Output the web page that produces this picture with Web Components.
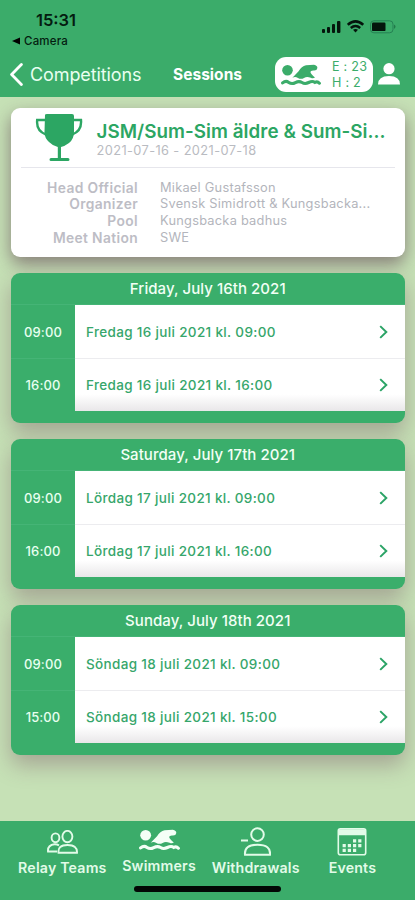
<!DOCTYPE html>
<html lang="en">
<head>
<meta charset="utf-8">
<title>Sessions</title>
<style>
html,body{margin:0;height:100%}
body{font-family:Inter,"Liberation Sans",sans-serif;background:#c6e1b6;overflow:hidden}
</style>
</head>
<body>
<meet-app></meet-app>
<script>
const define = (name, html) => customElements.define(name, class extends HTMLElement {
  constructor() {
    super();
    this.attachShadow({mode: 'open'}).innerHTML = typeof html === 'function' ? html(this) : html;
  }
});

define('swim-icon', `<style>:host{display:block}svg{display:block;width:100%;height:100%}</style>
<svg viewBox="0 0 40 22" preserveAspectRatio="none" fill="currentColor"><circle cx="6.5" cy="6.2" r="5.3"/>
<path d="M11.4 13.8 17.6 7.2Q20.5 2.4 25 1.3L33 .7Q36.4 1.4 36.4 4Q36 6.6 33 6.5Q29.5 6.2 29.4 8Q30 10.4 34 13.6Q32 15 29.8 13.8Q26 12 23 13.9Q20 15.6 17 13.9Q14 12.4 11.4 13.8Z"/>
<path d="M1.6 18.9Q4.8 16.2 7.8 18.4T14.4 18.6T21 18.5T27.7 18.5T34 18.4Q36.5 17.2 38.4 19.2" fill="none" stroke="currentColor" stroke-width="3.1" stroke-linecap="round"/></svg>`);

define('status-bar', `<style>
:host{display:flex;justify-content:space-between;height:54px;box-sizing:border-box;padding:12px 18px 0 12px;color:#041c10}
.time{margin-left:24px;font-size:16.5px;line-height:17px;font-weight:600;letter-spacing:0}
.from{display:flex;align-items:center;gap:4px;margin-top:5px;font-size:11.5px;line-height:14px;font-weight:500;letter-spacing:.2px}
.icons{display:flex;align-items:flex-start;gap:6px;padding-top:8px}svg{display:block}
</style><div><div class="time">15:31</div><div class="from"><svg width="8" height="8"><path d="M8 .6v6.8L0 4Z"/></svg><span>Camera</span></div></div>
<div class="icons"><svg width="19" height="14" fill="#04150c"><rect x="0" y="9" width="3" height="4" rx="1"/><rect x="5" y="7" width="3" height="6" rx="1"/><rect x="10" y="4" width="3" height="9" rx="1"/><rect x="15" y="1" width="3.4" height="12" rx="1"/></svg>
<svg width="17" height="13" viewBox="0 0 17 13" fill="none" stroke="#04150c" stroke-width="2.5"><path d="M.8 4.8Q8.5-2 16.2 4.8M3.8 8Q8.5 4 13.2 8"/><path d="M6 9.8Q8.5 8 11 9.8L8.5 12.5Z" fill="#04150c" stroke="none"/></svg>
<svg width="27" height="14"><rect x=".5" y=".8" width="22.5" height="12" rx="3.4" fill="none" stroke="#258153"/><rect x="2" y="2.5" width="13.5" height="8.6" rx="1.2" fill="#04150c"/><path d="M24.3 4.6Q26.5 6.8 24.3 9Z" fill="#17633b"/></svg></div>`);

define('nav-bar', `<style>
:host{display:grid;grid-template-columns:173px 102px 98px 1fr;height:43px;color:#fff;align-items:start}
.back{display:flex;align-items:center;gap:7px;padding:7px 0 0 10px;color:#e9fff0}
.back span{font-size:18px;line-height:27px;letter-spacing:-.1px}
b{font-size:15.5px;line-height:24px;padding-top:9px;font-weight:700;letter-spacing:.03px}
.pill{display:flex;margin-top:3px;height:35px;background:#fff;border-radius:11px;color:#3bac6a;align-items:center}
swim-icon{width:40px;height:22px;margin-left:6px}
.n{margin-left:11px;font-size:12.6px;line-height:15.3px;letter-spacing:.25px;white-space:pre}
.me{padding:8px 0 0 5px}svg{display:block}
</style><div class="back"><svg width="13" height="23" fill="none" stroke="#fff" stroke-width="2.8" stroke-linecap="round" stroke-linejoin="round"><path d="M11.4 1.6 1.6 11.5l9.8 9.9"/></svg><span>Competitions</span></div>
<b>Sessions</b><div class="pill"><swim-icon></swim-icon><div class="n">E : 23<br>H : 2</div></div>
<div class="me"><svg width="22" height="24" fill="#fff"><circle cx="11" cy="6.7" r="5.6"/><path d="M0 22.5Q0 14 11 14T22 22.5Z"/></svg></div>`);

define('meet-field', e => `<style>
:host{display:grid;grid-template-columns:127px 1fr;column-gap:22px;height:16.7px;line-height:16.7px;align-items:center}
b{text-align:right;font-weight:600;font-size:13.8px;letter-spacing:.36px;color:#bdbdc5}
span{font-size:12.8px;letter-spacing:.25px;color:#b3b5bc;white-space:nowrap}
</style><b>${e.getAttribute('label')}</b><span><slot></slot></span>`);

define('meet-card', `<style>
:host{display:block;height:149px;border-radius:9px;background:#fff;box-shadow:0 7px 17px rgba(90,55,75,.58)}
.top{display:flex;height:59px}.cup{padding:6px 0 0 24px;width:61.5px}svg{display:block}
.t{padding-top:12px;font-weight:600;font-size:18.8px;line-height:23px;color:#2ca663;letter-spacing:.05px;white-space:nowrap}
.d{font-size:12.8px;line-height:15px;color:#b9bbc1;letter-spacing:.4px}
hr{height:1px;border:0;margin:0 10px;background:#e6e6ec}
.f{padding-top:11.5px}
</style><div class="top"><div class="cup"><svg width="48" height="50" viewBox="0 0 48 50"><path d="M10 1Q10 0 12 0H37Q39 0 39 2V18Q39 25 34 29Q30 32 26 33V44H33Q34.5 44 34.5 45.5T33 47H16Q14.5 47 14.5 45.5T16 44H22.8V33Q18 32 14 28Q9.5 24 9.5 18Z" fill="#2ca663"/><path d="M10 6H2.2Q1 17 11 20.5M38.5 6H46Q47 17 37 20.5" fill="none" stroke="#2ca663" stroke-width="2.4"/></svg></div>
<div><div class="t">JSM/Sum-Sim äldre &amp; Sum-Si...</div><div class="d">2021-07-16 - 2021-07-18</div></div></div><hr>
<div class="f"><meet-field label="Head Official">Mikael Gustafsson</meet-field><meet-field label="Organizer">Svensk Simidrott &amp; Kungsbacka...</meet-field><meet-field label="Pool">Kungsbacka badhus</meet-field><meet-field label="Meet Nation">SWE</meet-field></div>`);

define('session-row', e => `<style>
:host{display:grid;grid-template-columns:64px 1fr;height:53.6px;box-sizing:border-box;border-top:1px solid #45b476}
.time{display:flex;align-items:center;justify-content:center;color:#e8fff0;font-size:13px;font-weight:500;letter-spacing:.1px;padding-top:1px}
.go{display:flex;align-items:center;justify-content:space-between;padding:1px 17px 0 11px;background:#fff;color:#36a66b;font-size:13.5px;font-weight:500;letter-spacing:.34px;white-space:nowrap}
:host(:last-of-type) .go{background:linear-gradient(#fff 68%,#e9e7e9);box-shadow:0 -1px #ececef}
</style><div class="time">${e.getAttribute('time')}</div><div class="go"><span><slot></slot></span>
<svg width="9" height="14" fill="none" stroke="#2ca467" stroke-width="2"><path d="M1.2 1.1 7.3 7l-6.1 5.9"/></svg></div>`);

define('session-day', e => `<style>
:host{display:block;height:150px;border-radius:9px;overflow:hidden;background:#3aae6b;box-shadow:0 10px 22px rgba(115,75,95,.4)}
h2{margin:0;height:31px;line-height:31px;text-align:center;color:#f2fff5;font-size:15px;font-weight:500;letter-spacing:.06px}
</style><h2>${e.getAttribute('day')}</h2><slot></slot>`);

define('tab-item', e => `<style>
:host{display:flex;flex-direction:column;align-items:center;color:#e2fbe8}
.i{height:var(--h,36px);display:flex;align-items:flex-end}
span{margin-top:2px;font-size:14.2px;line-height:18px;font-weight:600;letter-spacing:.18px;white-space:nowrap}
</style><div class="i"><slot></slot></div><span>${e.getAttribute('label')}</span>`);

define('tab-bar', `<style>
:host{display:block;height:79px;background:#3bac6a}
nav{display:grid;grid-template-columns:repeat(4,96.7px);padding-left:14px;height:65px}
svg{display:block}swim-icon{width:41px;height:22px;color:#f4fff6}
.home{width:147px;height:6px;border-radius:3px;background:#020805;margin:0 auto}
</style><nav>
<tab-item label="Relay Teams"><svg style="margin-bottom:3px" width="31" height="24" fill="none" stroke="currentColor" stroke-width="1.9"><ellipse cx="20.4" cy="6.6" rx="5" ry="5.7"/><path d="M11.5 22.7Q10.5 15 20.5 15T30 22.7ZM10 21.5H1Q.5 15 7.5 14.3Q10 14.2 12 15.4"/><ellipse cx="8.5" cy="7.8" rx="3.9" ry="4.4"/></svg></tab-item>
<tab-item label="Swimmers" style="--h:34px"><swim-icon style="margin-bottom:4px"></swim-icon></tab-item>
<tab-item label="Withdrawals"><svg style="margin-bottom:1px" width="31" height="29" fill="none" stroke="currentColor" stroke-width="2"><circle cx="17.5" cy="7.6" r="6.3"/><path d="M5 27.7Q4 17.8 17.5 17.8T30 27.7ZM1 13.5H8"/></svg></tab-item>
<tab-item label="Events"><svg style="margin-bottom:1px" width="30" height="29" fill="none" stroke="currentColor" stroke-width="1.6"><rect x="1.3" y="1.8" width="27.4" height="26" rx="2"/><path d="M2.5 3H27.5V7.5H2.5Z" fill="currentColor"/><path d="M16 13.8H25M5.6 18.6H25M5.6 23.4H20" stroke-dasharray="3.2 2" stroke-width="3.2"/></svg></tab-item>
</nav><div class="home"></div>`);

define('meet-app', `<style>
:host{display:flex;flex-direction:column;width:415px;height:900px;overflow:hidden}
header{background:#3bac6a;height:97px}
main{flex:1;min-height:0;overflow:hidden;padding:11px 10.5px 0 11px;display:flex;flex-direction:column;gap:16px;background:#c6e1b6}
main>*{flex:none}
</style><header><status-bar></status-bar><nav-bar></nav-bar></header>
<main><meet-card></meet-card>
<session-day day="Friday, July 16th 2021"><session-row time="09:00">Fredag 16 juli 2021 kl. 09:00</session-row><session-row time="16:00">Fredag 16 juli 2021 kl. 16:00</session-row></session-day>
<session-day day="Saturday, July 17th 2021"><session-row time="09:00">Lördag 17 juli 2021 kl. 09:00</session-row><session-row time="16:00">Lördag 17 juli 2021 kl. 16:00</session-row></session-day>
<session-day day="Sunday, July 18th 2021"><session-row time="09:00">Söndag 18 juli 2021 kl. 09:00</session-row><session-row time="15:00">Söndag 18 juli 2021 kl. 15:00</session-row></session-day>
</main><tab-bar></tab-bar>`);
</script>
</body>
</html>
